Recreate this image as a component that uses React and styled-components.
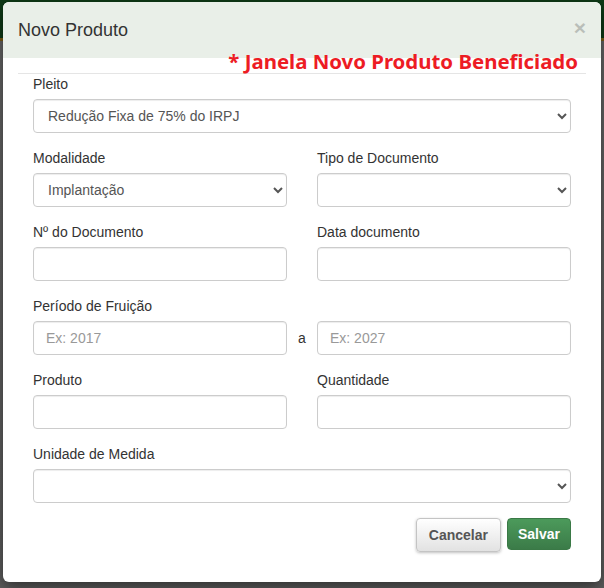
import React from 'react';
import styled, { createGlobalStyle } from 'styled-components';

const GlobalStyle = createGlobalStyle`
  html, body {
    margin: 0;
    padding: 0;
  }
  body {
    font-family: 'Liberation Sans', Arial, sans-serif;
    background: #606060;
  }
`;

const Backdrop = styled.div`
  width: 604px;
  height: 588px;
  box-sizing: border-box;
  padding: 2px 3px 6px 3px;
  background: linear-gradient(
    to bottom,
    #0e3a16 0,
    #0e3a16 38px,
    #7d5d14 38px,
    #7d5d14 41px,
    #666666 41px,
    #5e5e5e 100%
  );
`;

const Dialog = styled.div`
  position: relative;
  width: 598px;
  height: 580px;
  background: #fff;
  border-radius: 6px;
  box-shadow: 0 5px 15px rgba(0, 0, 0, 0.5);
  overflow: hidden;
`;

const Header = styled.div`
  height: 56px;
  box-sizing: border-box;
  padding: 0 15px;
  display: flex;
  align-items: center;
  justify-content: space-between;
  background: #e9efe8;
`;

const Title = styled.h4`
  margin: 0;
  font-size: 18px;
  font-weight: normal;
  color: #333;
  line-height: 20px;
`;

const Close = styled.button`
  border: 0;
  background: none;
  padding: 0;
  margin-top: -6px;
  font-family: 'Liberation Sans', Arial, sans-serif;
  font-size: 21px;
  font-weight: bold;
  line-height: 1;
  color: #000;
  opacity: 0.2;
  cursor: pointer;
`;

const Note = styled.span`
  position: absolute;
  top: 45px;
  right: 23px;
  font-family: 'Noto Sans', 'Open Sans', sans-serif;
  font-size: 20.4px;
  font-weight: bold;
  line-height: 28px;
  color: #ed1c24;
  white-space: nowrap;
`;

const Body = styled.div`
  padding: 15px 15px 0;
`;

const Form = styled.div`
  border-top: 1px solid #e5e5e5;
  padding: 0 15px;
  display: grid;
  grid-template-columns: 1fr 1fr;
  column-gap: 30px;
`;

const Group = styled.div`
  grid-column: ${(p) => (p.$full ? '1 / -1' : 'auto')};
  margin-bottom: 15px;
`;

const Label = styled.label`
  display: block;
  font-size: 14px;
  line-height: 20px;
  color: #333;
  margin-bottom: 5px;
`;

const controlStyle = `
  display: block;
  width: 100%;
  height: 34px;
  box-sizing: border-box;
  padding: 6px 12px;
  font-family: 'Liberation Sans', Arial, sans-serif;
  font-size: 14px;
  line-height: 20px;
  color: #555;
  background: #fff;
  border: 1px solid #ccc;
  border-radius: 4px;
  box-shadow: inset 0 1px 1px rgba(0, 0, 0, 0.075);
  outline: none;
`;

const Input = styled.input`
  ${controlStyle}
  &::placeholder {
    color: #999;
  }
`;

const Select = styled.select`
  ${controlStyle}
  padding-left: 10px;
`;

const Range = styled.div`
  display: grid;
  grid-template-columns: 1fr 30px 1fr;
  align-items: center;
`;

const RangeSep = styled.span`
  text-align: center;
  font-size: 14px;
  color: #333;
`;

const Footer = styled.div`
  display: flex;
  justify-content: flex-end;
  align-items: flex-start;
  gap: 6px;
  padding: 0 30px;
`;

const Button = styled.button`
  height: ${(p) => (p.$primary ? '32px' : '34px')};
  padding: 0 ${(p) => (p.$primary ? '10px' : '12px')};
  font-family: 'Liberation Sans', Arial, sans-serif;
  font-size: 14px;
  font-weight: bold;
  border-radius: 4px;
  cursor: pointer;
  color: ${(p) => (p.$primary ? '#fff' : '#555')};
  border: 1px solid ${(p) => (p.$primary ? '#3a7946' : '#c4c4c4')};
  background: ${(p) =>
    p.$primary
      ? 'linear-gradient(to bottom, #4c9a5b 0%, #3b7b48 100%)'
      : 'linear-gradient(to bottom, #ffffff 0%, #e2e2e2 100%)'};
  box-shadow: ${(p) =>
    p.$primary ? 'none' : '0 1px 3px rgba(0, 0, 0, 0.25)'};
`;

const Field = ({ label, full, children }) => (
  <Group $full={full}>
    <Label>{label}</Label>
    {children}
  </Group>
);

const App = () => (
  <>
    <GlobalStyle />
    <Backdrop>
      <Dialog>
        <Header>
          <Title>Novo Produto</Title>
          <Close type="button">×</Close>
        </Header>
        <Note>* Janela Novo Produto Beneficiado</Note>
        <Body>
          <Form>
            <Field label="Pleito" full>
              <Select defaultValue="75">
                <option value="75">Redução Fixa de 75% do IRPJ</option>
              </Select>
            </Field>
            <Field label="Modalidade">
              <Select defaultValue="impl">
                <option value="impl">Implantação</option>
              </Select>
            </Field>
            <Field label="Tipo de Documento">
              <Select defaultValue="">
                <option value="" />
              </Select>
            </Field>
            <Field label="Nº do Documento">
              <Input type="text" />
            </Field>
            <Field label="Data documento">
              <Input type="text" />
            </Field>
            <Field label="Período de Fruição" full>
              <Range>
                <Input type="text" placeholder="Ex: 2017" />
                <RangeSep>a</RangeSep>
                <Input type="text" placeholder="Ex: 2027" />
              </Range>
            </Field>
            <Field label="Produto">
              <Input type="text" />
            </Field>
            <Field label="Quantidade">
              <Input type="text" />
            </Field>
            <Field label="Unidade de Medida" full>
              <Select defaultValue="">
                <option value="" />
              </Select>
            </Field>
          </Form>
        </Body>
        <Footer>
          <Button type="button">Cancelar</Button>
          <Button type="button" $primary>
            Salvar
          </Button>
        </Footer>
      </Dialog>
    </Backdrop>
  </>
);

export default App;
